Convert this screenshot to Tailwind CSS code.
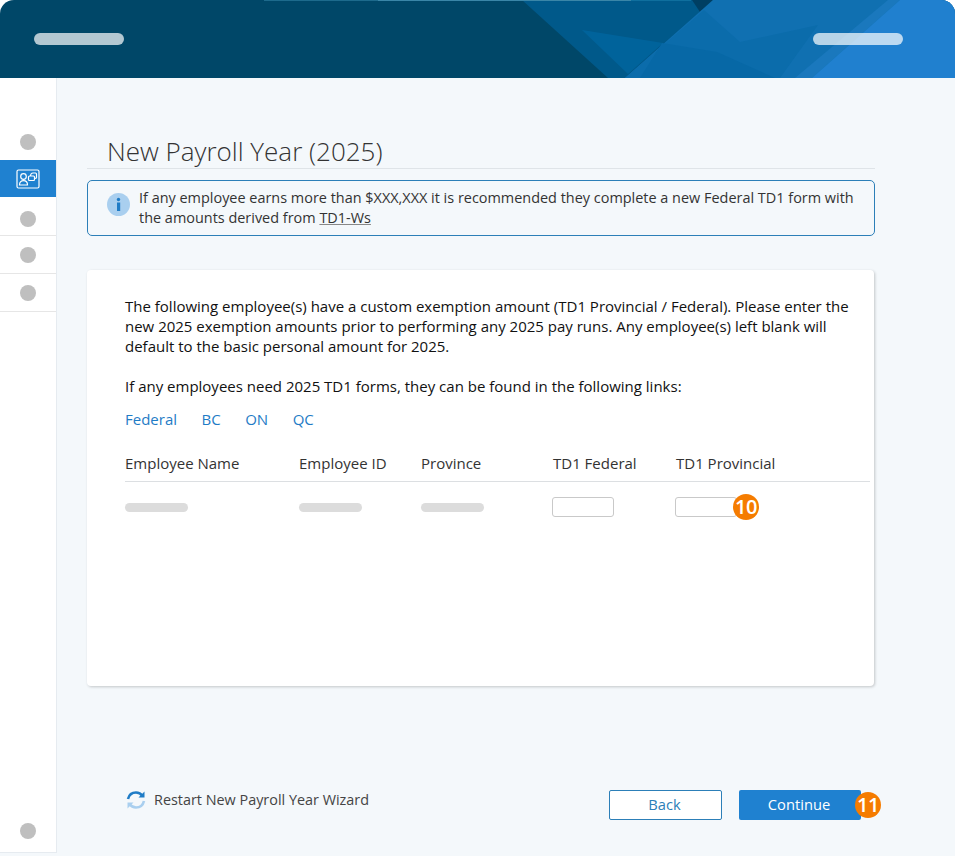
<!DOCTYPE html>
<html lang="en">
<head>
    <meta charset="UTF-8">
    <meta name="viewport" content="width=device-width, initial-scale=1.0">
    <script src="https://cdn.jsdelivr.net/npm/@tailwindcss/browser@4"></script>
    <title>New Payroll Year</title>
</head>
<body class="bg-white font-['Open_Sans',sans-serif]">
  <div class="w-[955px] h-[856px] overflow-hidden flex flex-col bg-[#f4f8fb]">

    <!-- Header -->
    <header class="relative h-[78px] shrink-0 bg-white">
      <div class="relative h-full rounded-t-[14px] overflow-hidden bg-[#004768] flex items-center justify-between pl-[34px] pr-[52px]">
        <svg class="absolute inset-0" width="955" height="78" viewBox="0 0 955 78">
          <polygon points="522,0 713,0 628,78 608,78" fill="#00598a"/>
          <polygon points="582,30 663,43 628,74" fill="#00639b"/>
          <polygon points="692,0 713,0 700,12" fill="#003f63"/>
          <polygon points="713,0 955,0 955,78 625,78" fill="#1070b1"/>
          <polygon points="704,10 740,42 818,25 780,78 625,78" fill="#0b6cab"/>
          <polygon points="662,43 717,52 775,78 640,78" fill="#0768a6"/>
          <polygon points="888,0 900,0 812,78 795,78" fill="#1a78bd"/>
          <polygon points="900,0 955,0 955,78 812,78" fill="#2080cf"/>
          <rect x="264" y="0" width="114" height="1" fill="#1d6a8c"/>
          <rect x="378" y="0" width="253" height="1" fill="#3a86a8"/>
          <rect x="631" y="0" width="60" height="1" fill="#0f6f9e"/>
        </svg>
        <div class="relative w-[90px] h-3 rounded-full bg-white/70"></div>
        <div class="relative w-[90px] h-3 rounded-full bg-white/70"></div>
      </div>
    </header>

    <div class="flex flex-1 min-h-0">
      <!-- Sidebar -->
      <aside class="w-[57px] h-[775px] shrink-0 bg-white border-r border-b border-[#e6ebf0] flex flex-col pt-[45px]">
        <div class="h-[37px] flex items-center justify-center"><span class="size-4 rounded-full bg-[#bfbfbf]"></span></div>
        <div class="h-[37px] bg-[#1f81d0] flex items-center justify-center">
          <svg width="24" height="20" viewBox="0 0 24 20" fill="none" stroke="#fff" stroke-width="1.200">
            <rect x="1" y="1" width="22" height="18" rx="1.500"/>
            <circle cx="7.500" cy="7.500" r="2.800"/>
            <path d="M3.500 16c0-3 1.800-4.300 4-4.300s4 1.300 4 4.300z"/>
            <rect x="12.500" y="7" width="6" height="4.500" rx="1"/>
            <path d="M14.500 7c0-1.800 1-3 2.500-3h2.500c.8 0 1 .5 1 1v3.500c0 .8-.5 1-2 1"/>
          </svg>
        </div>
        <div class="h-[39px] pt-[6px] flex items-center justify-center border-b border-[#e6e6e6]"><span class="size-4 rounded-full bg-[#bfbfbf]"></span></div>
        <div class="h-[38px] flex items-center justify-center border-b border-[#e6e6e6]"><span class="size-4 rounded-full bg-[#bfbfbf]"></span></div>
        <div class="h-[38px] flex items-center justify-center border-b border-[#e6e6e6]"><span class="size-4 rounded-full bg-[#bfbfbf]"></span></div>
        <div class="mt-auto mb-[13px] flex justify-center"><span class="size-4 rounded-full bg-[#bfbfbf]"></span></div>
      </aside>

      <!-- Main -->
      <main class="flex-1 pl-[30px] flex flex-col">
        <h1 class="mt-[56px] h-[35px] w-[788px] pl-5 border-b border-[#dfe4e8] text-[26px] leading-[34px] font-light text-[#333]">New Payroll Year (2025)</h1>

        <div class="mt-[11px] h-[56px] w-[788px] rounded-[5px] border border-[#2c7fb8] flex items-center pl-[19px] pr-4 gap-[9px]">
          <svg class="shrink-0 -mt-2" width="23" height="23" viewBox="0 0 23 23">
            <circle cx="11.500" cy="11.500" r="11.500" fill="#a9cfef"/>
            <circle cx="11.500" cy="6.500" r="1.700" fill="#1f7cc6"/>
            <rect x="10" y="9.500" width="3.200" height="8.500" fill="#1f7cc6"/>
          </svg>
          <p class="text-[14.450px] leading-5 text-[#333]">If any employee earns more than $XXX,XXX it is recommended they complete a new Federal TD1 form with the amounts derived from <span class="underline decoration-[#888]">TD1-Ws</span></p>
        </div>

        <section class="relative mt-[34px] h-[416px] w-[787px] rounded-[4px] bg-white shadow-[1px_1px_3px_rgba(0,0,0,0.2)] pt-[26px] pl-[38px] pr-[4px]">
          <p class="text-[15px] leading-5 text-[#111] pr-[20px]">The following employee(s) have a custom exemption amount (TD1 Provincial / Federal). Please enter the new 2025 exemption amounts prior to performing any 2025 pay runs. Any employee(s) left blank will default to the basic personal amount for 2025.</p>
          <p class="mt-5 text-[15px] leading-5 text-[#111]">If any employees need 2025 TD1 forms, they can be found in the following links:</p>
          <div class="mt-[13px] flex gap-[24.500px] text-[15px] leading-5 text-[#1f7cc6]">
            <span>Federal</span><span>BC</span><span>ON</span><span>QC</span>
          </div>

          <div class="mt-[24px] h-[29px] border-b border-[#dcdfe2] grid grid-cols-[174px_122px_132px_123px_1fr] text-[15px] leading-5 text-[#333]">
            <span>Employee Name</span><span>Employee ID</span><span>Province</span><span>TD1 Federal</span><span>TD1 Provincial</span>
          </div>
          <div class="h-[50px] grid grid-cols-[174px_122px_131px_123px_1fr] items-center">
            <span class="w-[63px] h-[9px] rounded-full bg-[#dcdcdc]"></span>
            <span class="w-[63px] h-[9px] rounded-full bg-[#dcdcdc]"></span>
            <span class="w-[63px] h-[9px] rounded-full bg-[#dcdcdc]"></span>
            <span class="w-[62px] h-5 rounded-[3px] border border-[#c9c9c9] bg-white"></span>
            <div class="relative w-[62px] h-5 rounded-[3px] border border-[#c9c9c9] bg-white">
              <span class="absolute -right-[23px] -top-[4px] size-[26px] rounded-full bg-[#f57c00] text-white text-[20px] leading-[26px] font-semibold text-center tracking-tight">10</span>
            </div>
          </div>
        </section>

        <!-- Footer -->
        <div class="mt-[104px] flex items-center h-[30px] w-[774px] pl-[39px]">
          <svg class="-mt-[11px]" width="20" height="20" viewBox="0 0 20 20" fill="none" stroke-width="2.600">
            <path d="M2 9C3 5 6 2.500 10 2.500c3 0 5 1.300 6.500 3.500" stroke="#1f7cc6"/>
            <path d="M18.500 1.500v6h-6z" fill="#1f7cc6"/>
            <path d="M18 11c-1 4-4 6.500-8 6.500-3 0-5-1.300-6.500-3.500" stroke="#a9cfef"/>
            <path d="M1.500 18.500v-6h6z" fill="#a9cfef"/>
          </svg>
          <span class="ml-2 -mt-[11px] text-[14.400px] text-[#444]">Restart New Payroll Year Wizard</span>
          <button class="ml-auto w-[113px] h-[30px] pb-[2px] pr-[2px] rounded-[2px] border border-[#2c7fb8] bg-white text-[14.700px] text-[#2c7fb8]">Back</button>
          <div class="relative ml-[17px] w-[122px] h-[30px]">
            <button class="w-full h-full pb-[2px] pr-[2px] rounded-[2px] bg-[#1f81d0] text-[14.700px] text-white">Continue</button>
            <span class="absolute -right-[20px] top-[2px] size-[26px] rounded-full bg-[#f57c00] text-white text-[20px] leading-[26px] font-semibold text-center tracking-tight">11</span>
          </div>
        </div>
      </main>
    </div>
  </div>
</body>
</html>
